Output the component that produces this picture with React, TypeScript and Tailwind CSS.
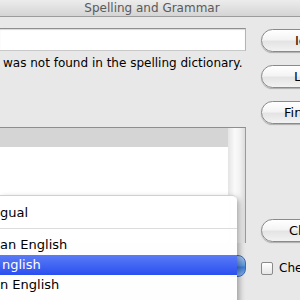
import React from "react";

const aqua =
  "bg-[linear-gradient(to_bottom,#ffffff_0%,#f4f4f4_45%,#e4e4e4_55%,#f2f2f2_100%)] border border-[#8a8a8a] rounded-full shadow-[0_1px_1px_rgba(0,0,0,0.25)]";

function AquaButton({ label, pad, mt }: { label: string; pad: string; mt: string }) {
  return (
    <div
      className={`${aqua} ${pad} ${mt} h-[23px] w-[110px] flex items-center text-[13px] text-black shrink-0`}
    >
      {label}
    </div>
  );
}

const languages = [
  { text: "an English", selected: false },
  { text: "nglish", selected: true },
  { text: "n English", selected: false },
];

export default function App() {
  return (
    <div className="relative w-[300px] h-[300px] overflow-hidden bg-[#e8e8e8] font-['DejaVu_Sans',sans-serif]">
      {/* title bar */}
      <div className="h-[17px] border-b border-[#9c9c9c] bg-[linear-gradient(to_bottom,#ececec,#d4d4d4)] flex items-center justify-center pl-[4px]">
        <span className="text-[12px] text-[#5a5a5a] leading-none">Spelling and Grammar</span>
      </div>

      <div className="flex">
        {/* left column */}
        <div className="w-[246px] flex flex-col shrink-0">
          <div className="mt-[11px] h-[23px] bg-white border-t border-t-[#8e8e8e] border-r border-r-[#b4b4b4] border-b border-b-[#c8c8c8] shadow-[inset_0_1px_1px_rgba(0,0,0,0.15)]" />
          <div className="mt-[5px] pl-[3px] text-[12px] text-black leading-[14px] whitespace-nowrap">
            was not found in the spelling dictionary.
          </div>

          {/* suggestion list */}
          <div className="mt-[57px] h-[116px] border-t border-[#8e8e8e] border-r border-r-[#9a9a9a] flex">
            <div className="flex-1 flex flex-col">
              <div className="h-[19px] bg-[#d5d5d5]" />
              <div className="flex-1 bg-white" />
            </div>
            <div className="w-[17px] bg-[linear-gradient(to_right,#e4e4e4,#fafafa_40%,#f2f2f2_70%,#dcdcdc)]" />
          </div>

          {/* language popup button */}
          <div className="mt-[12px] h-[22px] flex">
            <div className="flex-1 bg-white" />
            <div className="w-[16px] rounded-r-[8px] border border-[#3d6ab5] bg-[linear-gradient(to_bottom,#a9c8ef,#5a93dc_50%,#3c7ad0_55%,#8bb6ef)]" />
          </div>
        </div>

        {/* right column */}
        <div className="ml-[15px] flex flex-col">
          <AquaButton label="Ignore" pad="pl-[33px]" mt="mt-[12px]" />
          <AquaButton label="Learn" pad="pl-[32px]" mt="mt-[13px]" />
          <AquaButton label="Find Next" pad="pl-[22px]" mt="mt-[13px]" />
          <AquaButton label="Change" pad="pl-[27px]" mt="mt-[95px]" />
          <div className="mt-[17px] flex items-center gap-[6px]">
            <div className="w-[12px] h-[13px] rounded-[2px] border border-[#8a8a8a] bg-[linear-gradient(to_bottom,#ffffff,#e6e6e6)]" />
            <span className="text-[12px] text-black whitespace-nowrap">Check grammar</span>
          </div>
        </div>
      </div>

      {/* open language menu */}
      <div className="absolute left-0 top-[195px] w-[237px] h-[110px] bg-white/95 border-t border-[#d0d0d0] rounded-tr-[5px] shadow-[2px_3px_6px_rgba(0,0,0,0.35)] pt-[7px] text-[13px] text-black">
        <div className="h-[20px] flex items-center whitespace-nowrap">gual</div>
        <div className="h-[12px] flex flex-col">
          <div className="mt-[5px] h-px bg-[#dcdcdc]" />
        </div>
        {languages.map((l) => (
          <div
            key={l.text}
            className={`h-[20px] flex items-center whitespace-nowrap ${
              l.selected ? "bg-[linear-gradient(to_bottom,#5b7cf6,#2a4ff0)] text-white pl-[2px]" : ""
            }`}
          >
            {l.text}
          </div>
        ))}
      </div>
    </div>
  );
}
